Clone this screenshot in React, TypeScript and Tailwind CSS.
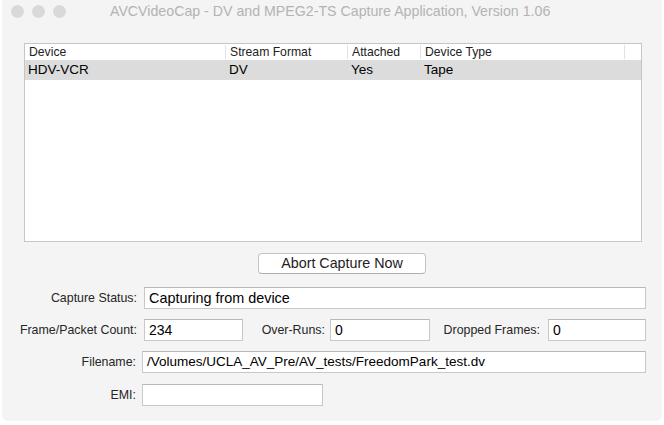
const columns = [
  { title: "Device", width: "w-[200px]" },
  { title: "Stream Format", width: "w-[122px]" },
  { title: "Attached", width: "w-[73px]" },
  { title: "Device Type", width: "w-[204px]" },
];

const row = ["HDV-VCR", "DV", "Yes", "Tape"];

const Field = ({ value, className }: { value: string; className: string }) => (
  <div
    className={`h-[22px] bg-white border border-[#c8c8c8] border-t-[#b8b8b8] pl-[4px] leading-[20px] text-black ${className}`}
  >
    {value}
  </div>
);

const Label = ({ text, className }: { text: string; className: string }) => (
  <div className={`text-[12.4px] text-[#262626] text-right ${className}`}>{text}</div>
);

const App = () => {
  return (
    <div
      className="w-[664px] h-[425px] bg-white"
      style={{ fontFamily: '"Liberation Sans", Arial, sans-serif' }}
    >
      <div className="ml-[2px] w-[660px] h-[421px] bg-[#f4f4f4] rounded-b-[6px] flex flex-col">
        {/* title bar */}
        <div className="h-[22px] flex items-center">
          <div className="flex gap-[8px] pl-[9px]">
            <span className="w-[13px] h-[13px] rounded-full bg-[#d9d9d9]" />
            <span className="w-[13px] h-[13px] rounded-full bg-[#d9d9d9]" />
            <span className="w-[13px] h-[13px] rounded-full bg-[#d9d9d9]" />
          </div>
          <div className="ml-[44px] mt-[1px] text-[14.2px] text-[#b3b3b3] whitespace-nowrap">
            AVCVideoCap - DV and MPEG2-TS Capture Application, Version 1.06
          </div>
        </div>

        {/* device table */}
        <div className="ml-[22px] mt-[21px] w-[618px] h-[199px] bg-white border border-[#c6c6c6]">
          <div className="flex h-[16px] items-center text-[12.2px] text-[#222]">
            {columns.map((c, i) => (
              <div
                key={c.title}
                className={`${c.width} h-[14px] leading-[14px] pl-[4px] whitespace-nowrap ${i > 0 ? "border-l border-[#e2e2e2]" : ""}`}
              >
                {c.title}
              </div>
            ))}
            <div className="h-[14px] border-l border-[#e2e2e2]" />
          </div>
          <div className="flex h-[20px] items-center bg-[#dcdcdc] text-[13.5px] text-black">
            {columns.map((c, i) => (
              <div key={c.title} className={`${c.width} ${i > 0 ? "pl-[4px]" : "pl-[3px]"}`}>
                {row[i]}
              </div>
            ))}
          </div>
        </div>

        {/* abort */}
        <button className="ml-[256px] mt-[11px] w-[168px] h-[21px] bg-white border border-[#c4c4c4] border-b-[#b0b0b0] rounded-[4px] text-[14.3px] leading-[19px] text-[#222]">
          Abort Capture Now
        </button>

        {/* capture form */}
        <div className="mt-[13px] flex items-center">
          <Label text="Capture Status:" className="w-[135px]" />
          <Field value="Capturing from device" className="ml-[7px] w-[502px] text-[14.4px]" />
        </div>

        <div className="mt-[10px] flex items-center">
          <Label text="Frame/Packet Count:" className="w-[135px]" />
          <Field value="234" className="ml-[7px] w-[99px] text-[14px]" />
          <Label text="Over-Runs:" className="w-[82px]" />
          <Field value="0" className="ml-[5px] w-[100px] text-[14px]" />
          <Label text="Dropped Frames:" className="w-[110px]" />
          <Field value="0" className="ml-[8px] w-[98px] text-[14px]" />
        </div>

        <div className="mt-[10px] flex items-center">
          <Label text="Filename:" className="w-[134px]" />
          <Field
            value="/Volumes/UCLA_AV_Pre/AV_tests/FreedomPark_test.dv"
            className="ml-[6px] w-[504px] text-[13.5px]"
          />
        </div>

        <div className="mt-[11px] flex items-center">
          <Label text="EMI:" className="w-[134px]" />
          <Field value="" className="ml-[6px] w-[181px]" />
        </div>
      </div>
    </div>
  );
};

export default App;
